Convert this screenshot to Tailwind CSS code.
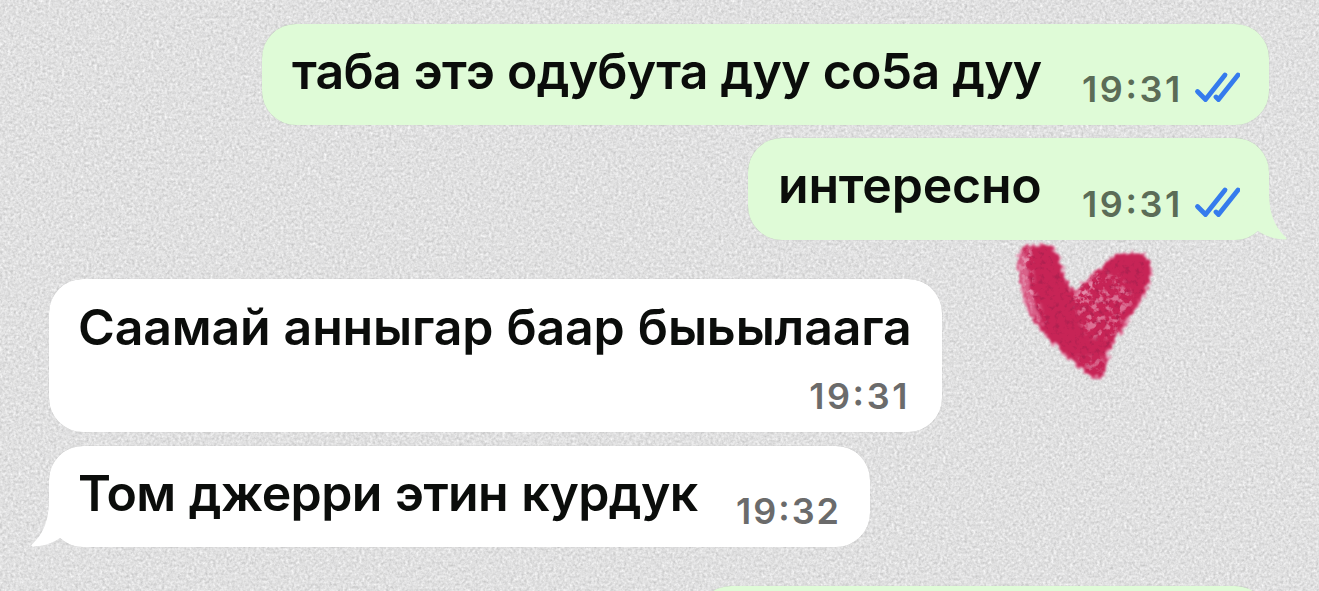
<!DOCTYPE html>
<html lang="sah">

<head>
  <meta charset="utf-8" />
  <title>Chat</title>
  <script src="https://cdn.jsdelivr.net/npm/@tailwindcss/browser@4"></script>
</head>

<body class="font-['Inter','Noto_Sans',sans-serif]">
  <div class="relative isolate w-[1319px] h-[591px] overflow-hidden bg-[#dfdfdf]">
    <!-- wallpaper -->
    <svg class="absolute inset-0 -z-10" width="1319" height="591" aria-hidden="true">
      <defs>
        <filter id="grain" x="0" y="0" width="100%" height="100%" color-interpolation-filters="sRGB">
          <feTurbulence type="fractalNoise" baseFrequency="0.37" numOctaves="2" seed="4" />
          <feColorMatrix values="0.17 0.17 0 0 0.708  0.17 0.17 0 0 0.708  0.17 0.17 0 0 0.71  0 0 0 0 1" />
        </filter>
        <filter id="chalk" x="-10%" y="-10%" width="120%" height="120%" color-interpolation-filters="sRGB">
          <feTurbulence type="fractalNoise" baseFrequency="0.2" numOctaves="3" seed="9" result="noise" />
          <feDisplacementMap in="SourceGraphic" in2="noise" scale="10" xChannelSelector="R" yChannelSelector="G" />
          <feGaussianBlur stdDeviation="1" />
        </filter>
        <filter id="specks" x="-10%" y="-10%" width="120%" height="120%" color-interpolation-filters="sRGB">
          <feTurbulence type="fractalNoise" baseFrequency="0.15" numOctaves="3" seed="12" result="noise" />
          <feColorMatrix values="0 0 0 0 0.9  0 0 0 0 0.56  0 0 0 0 0.68  5 0 0 0 -2.4" result="dots" />
          <feGaussianBlur in="SourceGraphic" stdDeviation="2.5" result="soft" />
          <feComposite in="dots" in2="soft" operator="in" />
          <feGaussianBlur stdDeviation="0.7" />
        </filter>
        <filter id="dark" x="-10%" y="-10%" width="120%" height="120%" color-interpolation-filters="sRGB">
          <feTurbulence type="fractalNoise" baseFrequency="0.2" numOctaves="3" seed="31" />
          <feColorMatrix values="0 0 0 0 0.62  0 0 0 0 0.12  0 0 0 0 0.3  4 0 0 0 -2.1" />
          <feComposite in2="SourceGraphic" operator="in" />
          <feGaussianBlur stdDeviation="0.6" />
        </filter>
      </defs>
      <rect width="1319" height="591" filter="url(#grain)" />
      <!-- heart -->
      <g transform="translate(1000 230)">
        <path d="M20 22C24 14 47 13 52 17C60 24 64 42 69 58C72 62 76 60 80 56L112 27C119 21 142 21 147 27C153 36 152 50 146 61C138 78 122 98 108 121C110 132 107 145 99 149C91 149 80 138 71 130C58 118 43 104 33 91C23 74 17 38 20 22Z" fill="#c72456" stroke="#e58fae" stroke-width="1.6" filter="url(#chalk)" />
        <path d="M22 22L46 19L60 45L70 64L112 30L146 32L144 60L105 122L100 145L72 126L36 88Z" fill="#fff" filter="url(#dark)" opacity=".55" />
        <path d="M21 24L27 20C26 46 32 68 44 96L36 90C24 72 19 42 21 24Z" fill="#e58aab" opacity=".6" filter="url(#chalk)" />
        <path d="M20 20L32 18C29 46 36 70 47 98L37 90C24 72 19 40 20 20Z" fill="#fff" filter="url(#specks)" />
        <path d="M74 66L100 42L122 48L134 70L112 108L90 108L78 88Z" fill="#fff" filter="url(#specks)" opacity=".7" />
        <path d="M72 66L102 40L94 60L80 76Z" fill="#fff" filter="url(#specks)" opacity=".9" />
        <path d="M76 126L105 128L102 145L94 147Z" fill="#fff" filter="url(#specks)" opacity=".6" />
      </g>
    </svg>

    <main class="flex flex-col pt-6 pl-[49px] pr-[50px] text-[50px] font-semibold leading-[60px] text-[#0b0d0b] whitespace-nowrap">
      <!-- outgoing -->
      <div class="self-end flex justify-between w-[1007px] h-[101px] pl-[30px] pr-[29px] pt-[17px] rounded-[34px] bg-[#dffbd7] shadow-[0_0_1px_rgba(0,0,0,0.2)]">
        <p class="tracking-[-0.78px] [word-spacing:1.1px]">таба этэ одубута дуу со5а дуу</p>
        <div class="flex pt-[26px] text-[36px] font-[560] leading-[44px] text-[#5b6c57]">
          <time class="w-[112px] tracking-[2.6px] [font-feature-settings:'case']">19:31</time>
          <svg class="mt-[4px]" width="46" height="34" viewBox="0 0 46 34" fill="none" stroke="#357bed" stroke-width="4.8" stroke-linecap="round" stroke-linejoin="round">
            <path d="M3.5 20.5L11.5 28.5L31 4" />
            <path d="M22 26L24.5 28.5L44 4" />
          </svg>
        </div>
      </div>

      <div class="relative self-end flex justify-between w-[521px] h-[102px] mt-[13px] pl-[30px] pr-[29px] pt-[17px] rounded-[34px] bg-[#dffbd7] shadow-[0_0_1px_rgba(0,0,0,0.2)]">
        <p class="tracking-[-0.2px]">интересно</p>
        <div class="flex pt-[27px] text-[36px] font-[560] leading-[44px] text-[#5b6c57]">
          <time class="w-[112px] tracking-[2.6px] [font-feature-settings:'case']">19:31</time>
          <svg class="mt-[4px]" width="46" height="34" viewBox="0 0 46 34" fill="none" stroke="#357bed" stroke-width="4.8" stroke-linecap="round" stroke-linejoin="round">
            <path d="M3.5 20.5L11.5 28.5L31 4" />
            <path d="M22 26L24.5 28.5L44 4" />
          </svg>
        </div>
        <svg class="absolute -right-[18px] bottom-0" width="50" height="52" viewBox="0 0 50 52" fill="#dffbd7">
          <path d="M32 2C32 24 36 37 49.5 50C50 51 49 51.6 48 51.5C37 51 28 48 21 43L4 20L20 2Z" />
        </svg>
      </div>

      <!-- incoming -->
      <div class="flex flex-col w-[893px] h-[153px] mt-[39px] pl-[29px] pr-[32px] pt-[18px] rounded-[34px] bg-white shadow-[0_0_1px_rgba(0,0,0,0.2)]">
        <p class="tracking-[-0.18px] [word-spacing:0.8px]">Саамай анныгар баар быьылаага</p>
        <time class="self-end mt-[17px] text-[36px] font-[560] leading-[44px] tracking-[2.6px] text-[#6b6b6b] [font-feature-settings:'case']">19:31</time>
      </div>

      <div class="relative flex justify-between w-[821px] h-[101px] mt-[14px] pl-[29px] pr-[29px] pt-[17px] rounded-[34px] bg-white shadow-[0_0_1px_rgba(0,0,0,0.2)]">
        <svg class="absolute -left-[18px] bottom-0" width="50" height="52" viewBox="0 0 50 52" fill="#fff">
          <path d="M18 2C18 24 14 37 .5 50C0 51 1 51.6 2 51.5C13 51 22 48 29 43L46 20L30 2Z" />
        </svg>
        <p class="relative tracking-[-0.6px] [word-spacing:1.2px]">Том джерри этин курдук</p>
        <time class="pt-[26px] text-[36px] font-[560] leading-[44px] tracking-[2px] text-[#6b6b6b] [font-feature-settings:'case']">19:32</time>
      </div>

      <div class="self-end w-[572px] h-[101px] mt-[39px] rounded-[34px] bg-[#dffbd7] shadow-[0_0_1px_rgba(0,0,0,0.2)]"></div>
    </main>
  </div>
</body>

</html>
